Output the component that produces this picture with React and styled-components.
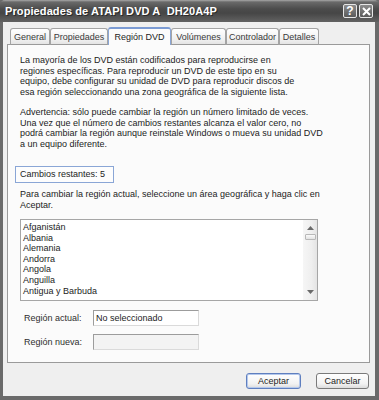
import styled, { createGlobalStyle } from "styled-components";

const GlobalStyle = createGlobalStyle`
  html, body {
    margin: 0;
    padding: 0;
    background: #ffffff;
  }
  body {
    font-family: "Liberation Sans", Arial, sans-serif;
  }
`;

const tabs = [
  { label: "General", width: 40 },
  { label: "Propiedades", width: 58 },
  { label: "Región DVD", width: 63, active: true },
  { label: "Volúmenes", width: 55 },
  { label: "Controlador", width: 53 },
  { label: "Detalles", width: 40 },
];

const intro = [
  "La mayoría de los DVD están codificados para reproducirse en",
  "regiones específicas. Para reproducir un DVD de este tipo en su",
  "equipo, debe configurar su unidad de DVD para reproducir discos de",
  "esa región seleccionando una zona geográfica de la siguiente lista.",
];

const warning = [
  "Advertencia: sólo puede cambiar la región un número limitado de veces.",
  "Una vez que el número de cambios restantes alcanza el valor cero, no",
  "podrá cambiar la región aunque reinstale Windows o mueva su unidad DVD",
  "a un equipo diferente.",
];

const hint = [
  "Para cambiar la región actual, seleccione un área geográfica y haga clic en",
  "Aceptar.",
];

const countries = [
  "Afganistán",
  "Albania",
  "Alemania",
  "Andorra",
  "Angola",
  "Anguilla",
  "Antigua y Barbuda",
];

const DvdRegionDialog = () => {
  return (
    <Window>
      <GlobalStyle />
      <TitleBar>
        <Title>Propiedades de ATAPI DVD A&nbsp; DH20A4P</Title>
        <CaptionButtons>
          <CaptionButton>?</CaptionButton>
          <CaptionButton>
            <svg width="9" height="9" viewBox="0 0 9 9">
              <path d="M1 1 L8 8 M8 1 L1 8" stroke="#fff" strokeWidth="2" />
            </svg>
          </CaptionButton>
        </CaptionButtons>
      </TitleBar>
      <Frame>
        <TabStrip>
          {tabs.map((t) => (
            <Tab key={t.label} $width={t.width} $active={t.active}>
              {t.label}
            </Tab>
          ))}
        </TabStrip>
        <Panel>
          <Paragraph>
            {intro.map((l) => (
              <Line key={l}>{l}</Line>
            ))}
          </Paragraph>
          <Paragraph>
            {warning.map((l) => (
              <Line key={l}>{l}</Line>
            ))}
          </Paragraph>
          <CountBox>Cambios restantes: 5</CountBox>
          <Hint>
            {hint.map((l) => (
              <Line key={l}>{l}</Line>
            ))}
          </Hint>
          <ListBox>
            <Items>
              {countries.map((c) => (
                <Item key={c}>{c}</Item>
              ))}
            </Items>
            <ScrollBar>
              <ScrollArrow>
                <svg width="7" height="4" viewBox="0 0 7 4">
                  <path d="M0 4 L3.5 0 L7 4 Z" fill="#6a6a6a" />
                </svg>
              </ScrollArrow>
              <Thumb />
              <ScrollArrow $bottom>
                <svg width="7" height="4" viewBox="0 0 7 4">
                  <path d="M0 0 L3.5 4 L7 0 Z" fill="#6a6a6a" />
                </svg>
              </ScrollArrow>
            </ScrollBar>
          </ListBox>
          <FieldRow>
            <FieldLabel>Región actual:</FieldLabel>
            <Field>No seleccionado</Field>
          </FieldRow>
          <FieldRow>
            <FieldLabel>Región nueva:</FieldLabel>
            <Field $disabled />
          </FieldRow>
        </Panel>
        <ButtonRow>
          <Button $default $width={55}>Aceptar</Button>
          <Button $width={53}>Cancelar</Button>
        </ButtonRow>
      </Frame>
    </Window>
  );
};

const Window = styled.div`
  width: 379px;
  height: 400px;
  display: flex;
  flex-direction: column;
  overflow: hidden;
  background: #6a6a6a;
`;

const TitleBar = styled.div`
  height: 22px;
  flex: none;
  display: flex;
  align-items: center;
  justify-content: space-between;
  padding: 0 5px 0 5px;
  box-sizing: border-box;
  background: linear-gradient(#a8a8a8 0, #6a6a6a 2px, #4c4c4c 40%, #464646 60%, #626262 100%);
  border-radius: 5px 5px 0 0;
`;

const Title = styled.div`
  color: #ffffff;
  font-size: 11px;
  font-weight: bold;
  letter-spacing: 0.1px;
  text-shadow: 1px 1px 0 #2a2a2a;
  white-space: nowrap;
`;

const CaptionButtons = styled.div`
  display: flex;
  gap: 2px;
  margin-right: 1px;
`;

const CaptionButton = styled.div`
  width: 14px;
  height: 14px;
  box-sizing: border-box;
  display: flex;
  align-items: center;
  justify-content: center;
  border: 1px solid #e6e6e6;
  border-radius: 2px;
  background: linear-gradient(#8c8c8c, #5a5a5a);
  color: #ffffff;
  font-size: 12px;
  font-weight: bold;
  line-height: 1;
`;

const Frame = styled.div`
  flex: 1;
  display: flex;
  flex-direction: column;
  background: #efefef;
  margin: 0 4px 4px 3px;
  padding: 5px 5px 0 4px;
`;

const TabStrip = styled.div`
  display: flex;
  align-items: flex-end;
  height: 18px;
  padding-left: 3px;
  margin-bottom: -1px;
  position: relative;
  z-index: 1;
`;

const Tab = styled.div`
  width: ${(p) => p.$width}px;
  height: ${(p) => (p.$active ? 18 : 17)}px;
  box-sizing: border-box;
  display: flex;
  align-items: center;
  justify-content: center;
  font-size: 9px;
  color: ${(p) => (p.$active ? "#1e1e1e" : "#3a3a3a")};
  border: 1px solid ${(p) => (p.$active ? "#8aa6d6" : "#a4a4a4")};
  border-bottom: ${(p) => (p.$active ? "none" : "1px solid #9a9a9a")};
  border-top: ${(p) => (p.$active ? "2px solid #7b9bd4" : "1px solid #a4a4a4")};
  border-radius: 3px 3px 0 0;
  background: ${(p) => (p.$active ? "#fbfbfb" : "linear-gradient(#ffffff, #f0f0f0 70%, #e4e4e4)")};
  white-space: nowrap;
`;

const Panel = styled.div`
  height: 319px;
  flex: none;
  box-sizing: border-box;
  border: 1px solid #9a9a9a;
  background: #fbfbfb;
  padding: 10px 12px 0 12px;
  display: flex;
  flex-direction: column;
  font-size: 9px;
  line-height: 10.5px;
  color: #1c1c1c;
`;

const Paragraph = styled.div`
  margin-bottom: 10px;
`;

const Line = styled.div`
  white-space: nowrap;
`;

const CountBox = styled.div`
  width: 99px;
  height: 17px;
  box-sizing: border-box;
  margin: 7px 0 0 -5px;
  padding-left: 4px;
  display: flex;
  align-items: center;
  border: 1px solid #8aa6d6;
  background: #fdfdfd;
`;

const Hint = styled.div`
  margin-top: 6px;
`;

const ListBox = styled.div`
  width: 298px;
  height: 82px;
  box-sizing: border-box;
  margin-top: 9px;
  border: 1px solid #a6a6a6;
  background: #ffffff;
  display: flex;
  overflow: hidden;
`;

const Items = styled.div`
  flex: 1;
  padding: 2px 0 0 2px;
`;

const Item = styled.div`
  height: 10.6px;
  line-height: 10.6px;
  white-space: nowrap;
`;

const ScrollBar = styled.div`
  width: 14px;
  flex: none;
  display: flex;
  flex-direction: column;
  align-items: center;
  background: linear-gradient(90deg, #f6f6f6, #efefef 60%, #e4e4e4);
`;

const ScrollArrow = styled.div`
  height: 12px;
  display: flex;
  align-items: center;
  justify-content: center;
  margin-top: ${(p) => (p.$bottom ? "auto" : "2px")};
  margin-bottom: ${(p) => (p.$bottom ? "2px" : "0")};
`;

const Thumb = styled.div`
  width: 11px;
  height: 6px;
  box-sizing: border-box;
  border: 1px solid #b8b8b8;
  border-radius: 1px;
  background: linear-gradient(#fafafa, #e2e2e2);
`;

const FieldRow = styled.div`
  display: flex;
  align-items: center;
  margin-top: 9px;
  & + & {
    margin-top: 8px;
  }
`;

const FieldLabel = styled.div`
  width: 69px;
  padding-left: 4px;
  color: #2e2e2e;
`;

const Field = styled.div`
  width: 106px;
  height: 16px;
  box-sizing: border-box;
  display: flex;
  align-items: center;
  padding-left: 2px;
  border: 1px solid #9c9c9c;
  border-right-color: #dadada;
  border-bottom-color: #dadada;
  background: ${(p) => (p.$disabled ? "#f3f3f3" : "#ffffff")};
  color: #1c1c1c;
`;

const ButtonRow = styled.div`
  display: flex;
  justify-content: flex-end;
  gap: 15px;
  margin-top: 10px;
  padding-right: 1px;
`;

const Button = styled.div`
  width: ${(p) => p.$width}px;
  height: 16px;
  box-sizing: border-box;
  display: flex;
  align-items: center;
  justify-content: center;
  font-size: 9px;
  color: #1c1c1c;
  border: 1px solid ${(p) => (p.$default ? "#5f7fbf" : "#7a7a7a")};
  border-radius: 3px;
  background: linear-gradient(#ffffff, #f2f2f2 70%, #dcdcdc);
  box-shadow: ${(p) => (p.$default ? "inset 0 0 0 1px #b4c8ec" : "none")};
`;

export default DvdRegionDialog;
